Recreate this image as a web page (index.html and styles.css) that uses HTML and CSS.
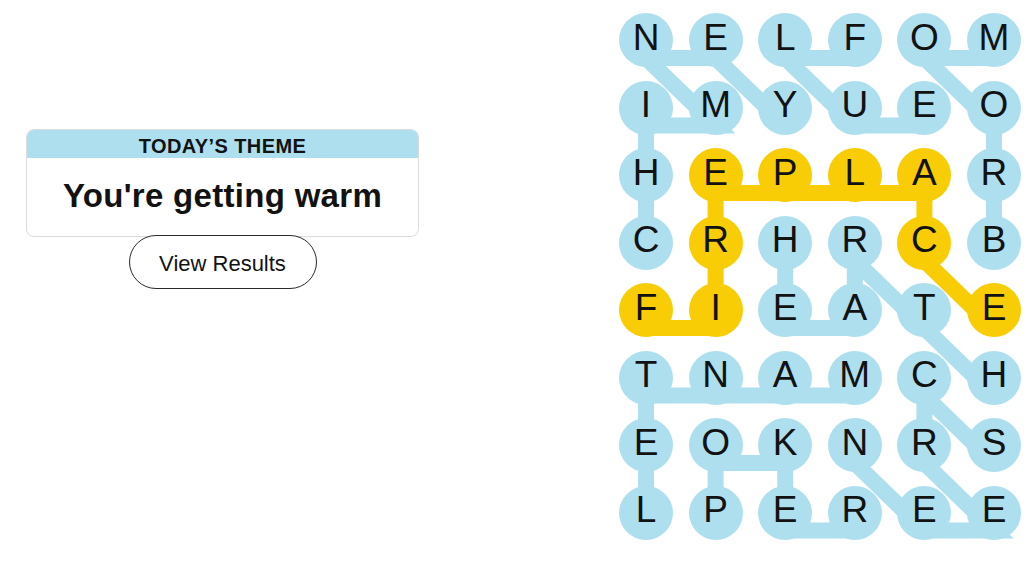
FILE: index.html
```html
<!DOCTYPE html>
<html lang="en">
<head>
<meta charset="utf-8">
<title>Strands</title>
<link rel="stylesheet" href="styles.css">
</head>
<body>
<main class="page">
  <section class="side">
    <div class="theme-card">
      <div class="theme-head">TODAY’S THEME</div>
      <div class="theme-body">You're getting warm</div>
    </div>
    <button class="results-btn" type="button">View Results</button>
  </section>
  <section class="board">
    <svg class="paths" width="402" height="540" viewBox="0 0 402 540" aria-hidden="true">
      <polyline class="word" points="27,247.5 27,180 27,112.5 96.6,112.5 27,45 96.6,45 166.2,112.5"/>
      <polyline class="word" points="235.8,45 166.2,45 235.8,112.5 305.4,112.5"/>
      <polyline class="word" points="375,247.5 375,180 375,112.5 305.4,45 375,45"/>
      <polyline class="word" points="166.2,247.5 166.2,315 235.8,315 235.8,247.5 305.4,315 375,382.5"/>
      <polyline class="word" points="235.8,382.5 166.2,382.5 96.6,382.5 27,382.5 27,450 27,517.5"/>
      <polyline class="word" points="96.6,517.5 96.6,450 166.2,450 166.2,517.5 235.8,517.5"/>
      <polyline class="word" points="375,450 305.4,382.5 305.4,450 375,517.5 305.4,517.5 235.8,450"/>
      <polyline class="word spangram" points="27,315 96.6,315 96.6,247.5 96.6,180 166.2,180 235.8,180 305.4,180 305.4,247.5 375,315"/>
    </svg>
    <div class="cell">N</div><div class="cell">E</div><div class="cell">L</div><div class="cell">F</div><div class="cell">O</div><div class="cell">M</div>
    <div class="cell">I</div><div class="cell">M</div><div class="cell">Y</div><div class="cell">U</div><div class="cell">E</div><div class="cell">O</div>
    <div class="cell">H</div><div class="cell gold">E</div><div class="cell gold">P</div><div class="cell gold">L</div><div class="cell gold">A</div><div class="cell">R</div>
    <div class="cell">C</div><div class="cell gold">R</div><div class="cell">H</div><div class="cell">R</div><div class="cell gold">C</div><div class="cell">B</div>
    <div class="cell gold">F</div><div class="cell gold">I</div><div class="cell">E</div><div class="cell">A</div><div class="cell">T</div><div class="cell gold">E</div>
    <div class="cell">T</div><div class="cell">N</div><div class="cell">A</div><div class="cell">M</div><div class="cell">C</div><div class="cell">H</div>
    <div class="cell">E</div><div class="cell">O</div><div class="cell">K</div><div class="cell">N</div><div class="cell">R</div><div class="cell">S</div>
    <div class="cell">L</div><div class="cell">P</div><div class="cell">E</div><div class="cell">R</div><div class="cell">E</div><div class="cell">E</div>
  </section>
</main>
</body>
</html>
```

FILE: styles.css
```css
* {
  box-sizing: border-box;
}

html, body {
  margin: 0;
  background: #ffffff;
}

body {
  font-family: "Liberation Sans", Arial, sans-serif;
  color: #121212;
}

.page {
  display: flex;
  align-items: flex-start;
  gap: 200px;
  padding-left: 26px;
}

.side {
  width: 393px;
  padding-top: 129px;
  display: flex;
  flex-direction: column;
  align-items: center;
}

.theme-card {
  width: 393px;
  border: 1px solid #dcdcdc;
  border-radius: 8px;
  overflow: hidden;
}

.theme-head {
  height: 29px;
  margin: -1px -1px 0;
  padding-top: 3px;
  background: #aedfee;
  text-align: center;
  font-size: 20px;
  font-weight: 700;
  letter-spacing: 0.4px;
  line-height: 28px;
}

.theme-body {
  height: 78px;
  display: flex;
  align-items: center;
  justify-content: center;
  font-size: 33px;
  font-weight: 700;
  letter-spacing: 0.3px;
  padding-bottom: 2px;
}

.results-btn {
  margin-top: -2px;
  width: 188px;
  height: 54px;
  border: 1px solid #2a2a2a;
  border-radius: 27px;
  background: #ffffff;
  color: #121212;
  font-family: "Liberation Sans", Arial, sans-serif;
  font-size: 22px;
  padding: 3px 0 0;
}

.board {
  position: relative;
  margin-top: 13px;
  display: grid;
  grid-template-columns: repeat(6, 54px);
  grid-auto-rows: 54px;
  column-gap: 15.6px;
  row-gap: 13.5px;
}

.paths {
  position: absolute;
  left: 0;
  top: 0;
  overflow: visible;
  z-index: 0;
}

.word {
  fill: none;
  stroke: #aedfee;
  stroke-width: 16;
  stroke-linejoin: miter;
  stroke-linecap: butt;
}

.word.spangram {
  stroke: #f8cd05;
}

.cell {
  position: relative;
  z-index: 1;
  width: 54px;
  height: 54px;
  border-radius: 50%;
  background: #aedfee;
  display: flex;
  align-items: center;
  justify-content: center;
  padding-bottom: 6px;
  font-size: 37px;
  line-height: 1;
}

.cell.gold {
  background: #f8cd05;
}
```
